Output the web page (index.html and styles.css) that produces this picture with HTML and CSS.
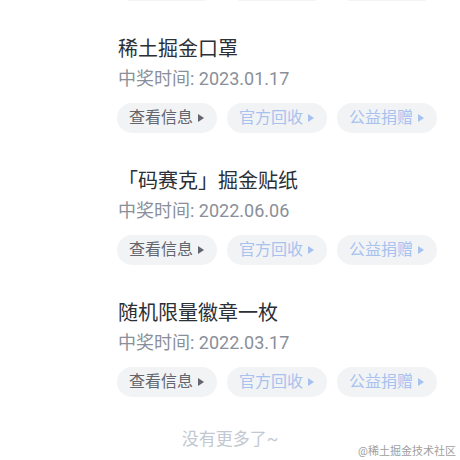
FILE: index.html
```html
<!DOCTYPE html>
<html lang="zh-CN">
<head>
<meta charset="utf-8">
<title>中奖记录</title>
<link rel="stylesheet" href="styles.css">
</head>
<body>
<div class="page">
  <div class="list">
    <div class="actions actions-prev">
      <span class="btn"></span>
      <span class="btn"></span>
      <span class="btn"></span>
    </div>

    <div class="item">
      <div class="title">稀土掘金口罩</div>
      <div class="date">中奖时间: 2023.01.17</div>
      <div class="actions">
        <span class="btn btn-info">查看信息<svg class="tri" viewBox="0 0 6 8"><path d="M0 0L6 4L0 8Z"/></svg></span>
        <span class="btn btn-off">官方回收<svg class="tri" viewBox="0 0 6 8"><path d="M0 0L6 4L0 8Z"/></svg></span>
        <span class="btn btn-off">公益捐赠<svg class="tri" viewBox="0 0 6 8"><path d="M0 0L6 4L0 8Z"/></svg></span>
      </div>
    </div>

    <div class="item">
      <div class="title">「码赛克」掘金贴纸</div>
      <div class="date">中奖时间: 2022.06.06</div>
      <div class="actions">
        <span class="btn btn-info">查看信息<svg class="tri" viewBox="0 0 6 8"><path d="M0 0L6 4L0 8Z"/></svg></span>
        <span class="btn btn-off">官方回收<svg class="tri" viewBox="0 0 6 8"><path d="M0 0L6 4L0 8Z"/></svg></span>
        <span class="btn btn-off">公益捐赠<svg class="tri" viewBox="0 0 6 8"><path d="M0 0L6 4L0 8Z"/></svg></span>
      </div>
    </div>

    <div class="item">
      <div class="title">随机限量徽章一枚</div>
      <div class="date">中奖时间: 2022.03.17</div>
      <div class="actions">
        <span class="btn btn-info">查看信息<svg class="tri" viewBox="0 0 6 8"><path d="M0 0L6 4L0 8Z"/></svg></span>
        <span class="btn btn-off">官方回收<svg class="tri" viewBox="0 0 6 8"><path d="M0 0L6 4L0 8Z"/></svg></span>
        <span class="btn btn-off">公益捐赠<svg class="tri" viewBox="0 0 6 8"><path d="M0 0L6 4L0 8Z"/></svg></span>
      </div>
    </div>
  </div>

  <div class="nomore">没有更多了~</div>
  <div class="watermark">@稀土掘金技术社区</div>
</div>
</body>
</html>
```

FILE: styles.css
```css
html, body {
  margin: 0;
  padding: 0;
  background: #ffffff;
}

body {
  font-family: Roboto, "Noto Sans CJK SC", sans-serif;
  overflow: hidden;
}

.page {
  position: relative;
  width: 460px;
  height: 460px;
  overflow: hidden;
}

.list {
  padding-left: 117px;
}

.actions {
  display: flex;
  gap: 10px;
  margin-top: 11px;
}

.actions-prev {
  margin-top: -29px;
}

.item {
  padding-top: 34px;
}

.title {
  font-size: 20px;
  line-height: 28px;
  color: #2b2f36;
  padding-left: 1px;
}

.date {
  margin-top: 3px;
  font-size: 18px;
  line-height: 26px;
  color: #8a8f99;
  padding-left: 1px;
}

.btn {
  box-sizing: border-box;
  width: 100px;
  height: 30px;
  border-radius: 15px;
  background: #f2f3f5;
  display: flex;
  align-items: center;
  padding-left: 12px;
  gap: 5px;
  font-size: 16px;
  line-height: 30px;
}

.tri {
  width: 6px;
  height: 8px;
}

.btn-info {
  color: #61666f;
}

.btn-info .tri {
  fill: #61666f;
}

.btn-off {
  color: #a7c2ee;
}

.btn-off .tri {
  fill: #a7c2ee;
}

.nomore {
  margin-top: 30px;
  text-align: center;
  font-size: 17px;
  line-height: 24px;
  color: #c2c8d1;
}

.watermark {
  position: absolute;
  right: 4px;
  bottom: 1px;
  font-size: 11px;
  line-height: 14px;
  color: #a0a0a0;
}
```
